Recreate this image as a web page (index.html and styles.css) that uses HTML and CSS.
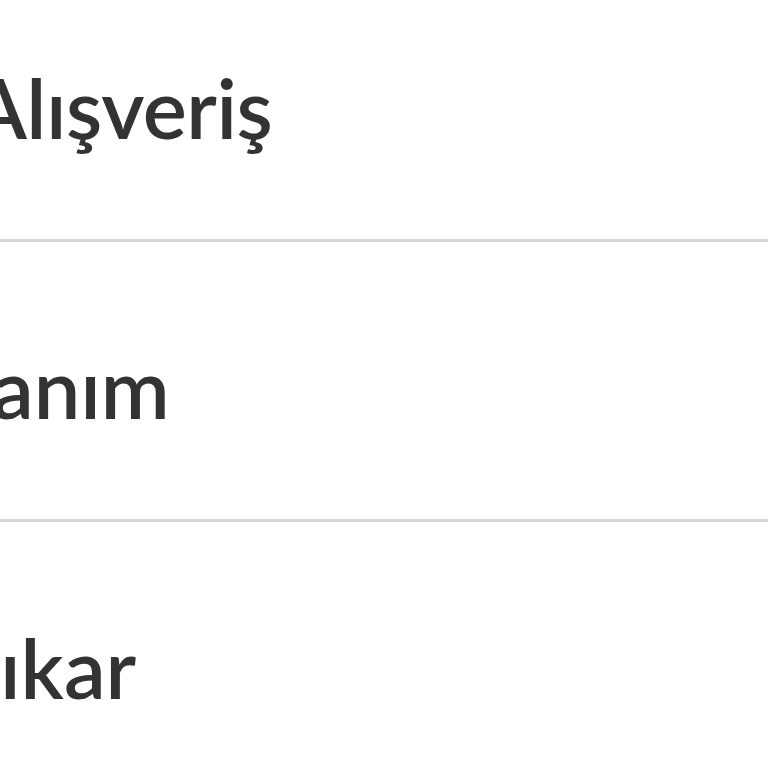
FILE: index.html
```html
<!DOCTYPE html>
<html lang="tr">
<head>
<meta charset="utf-8">
<link rel="stylesheet" href="styles.css">
</head>
<body>
<ul class="menu">
  <li class="menu-item menu-item--a"><span class="label">Alışveriş</span></li>
  <li class="menu-item menu-item--b"><span class="label">anım</span></li>
  <li class="menu-item menu-item--c"><span class="label">ıkar</span></li>
</ul>
</body>
</html>
```
FILE: styles.css
```css
html, body {
  margin: 0;
  padding: 0;
  background: #ffffff;
  overflow: hidden;
}
.menu {
  list-style: none;
  margin: -38px 0 0 0;
  padding: 0;
}
.menu-item {
  box-sizing: content-box;
  padding-top: 95px;
  height: 182px;
  border-bottom: 3px solid #d6d6d6;
  font-family: Lato, "Open Sans", sans-serif;
  font-weight: 600;
  font-size: 83px;
  line-height: 100px;
  color: #333333;
  white-space: nowrap;
}
.menu-item--a { text-indent: -30px; letter-spacing: -0.5px; }
.menu-item--b { text-indent: -8px; }
.menu-item--c { text-indent: 0; }
```
